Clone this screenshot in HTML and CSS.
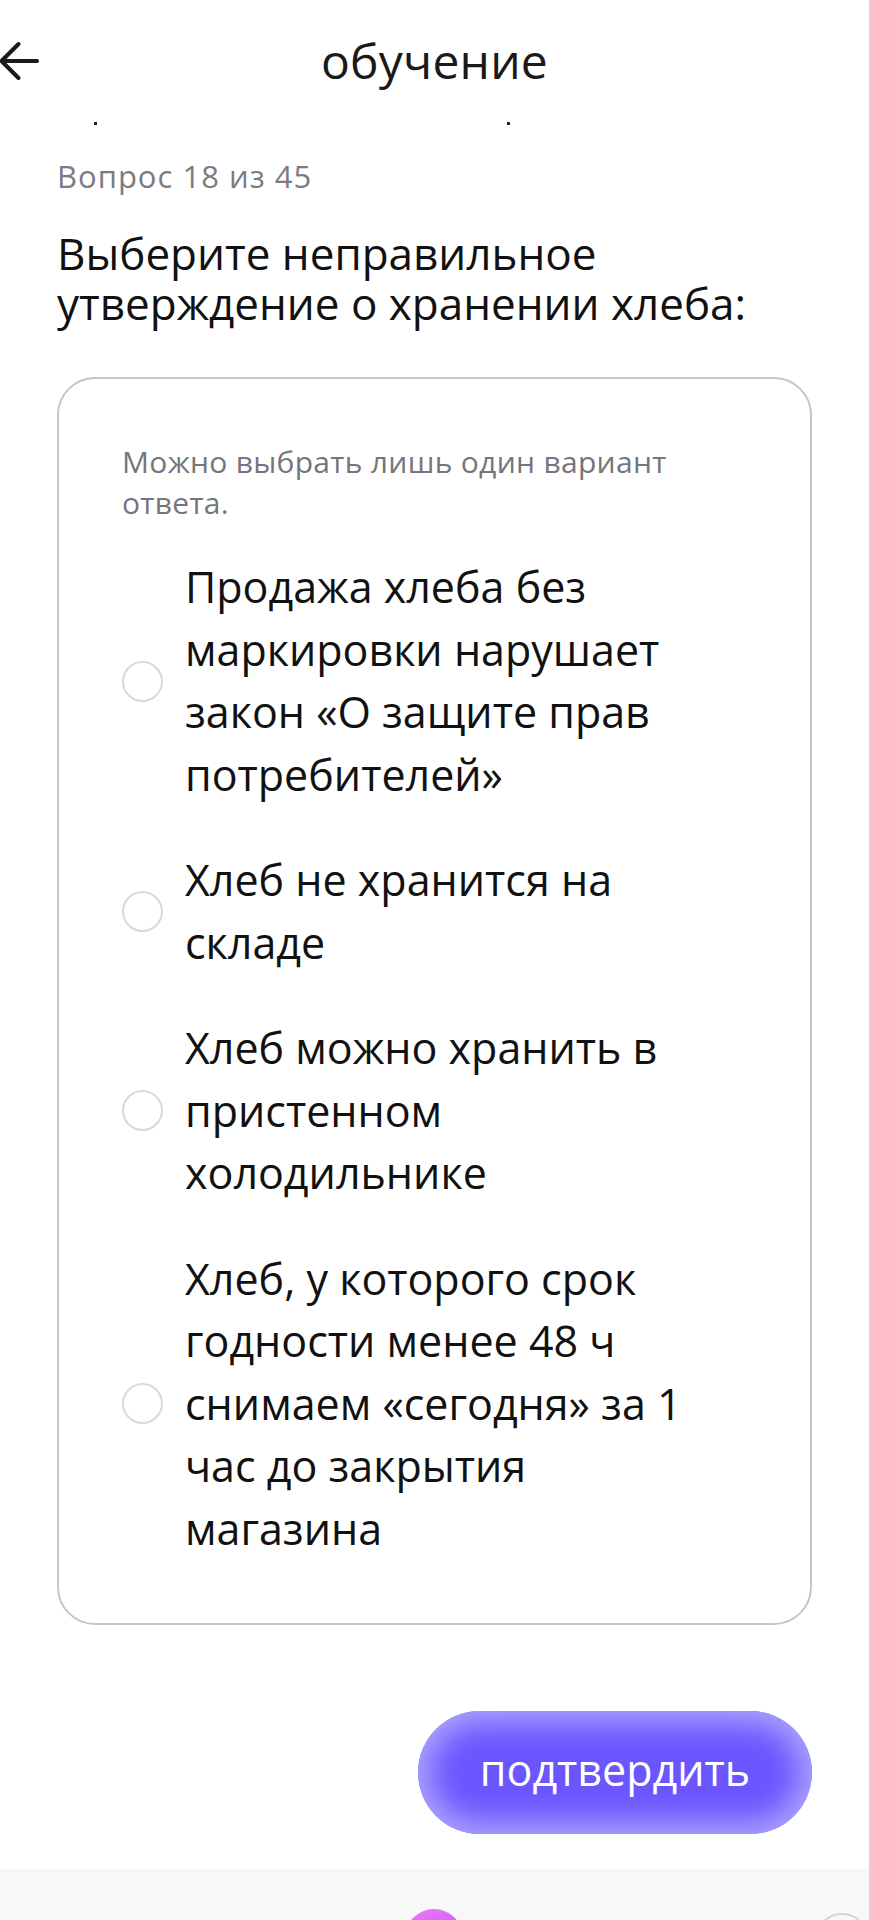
FILE: index.html
```html
<!DOCTYPE html>
<html lang="ru">
<head>
<meta charset="utf-8">
<title>обучение</title>
<link rel="stylesheet" href="styles.css">
</head>
<body>
<div class="screen">
  <header class="topbar">
    <svg class="back" width="42" height="42" viewBox="0 0 42 42" aria-hidden="true">
      <path d="M1.5 21 H37 M1.5 21 L18.5 4 M1.5 21 L18.5 38" fill="none" stroke="#1a1a1a" stroke-width="4" stroke-linecap="round" stroke-linejoin="round"/>
    </svg>
    <h1 class="title">обучение</h1>
  </header>
  <div class="scrolled-remnant"><span class="dot"></span><span class="dot dot-right"></span></div>
  <main class="content">
    <p class="counter">Вопрос 18 из 45</p>
    <h2 class="question">Выберите неправильное утверждение о хранении хлеба:</h2>
    <section class="card">
      <p class="hint">Можно выбрать лишь один вариант ответа.</p>
      <ul class="options">
        <li class="option"><span class="radio"></span><span class="option-text">Продажа хлеба без маркировки нарушает закон «О защите прав потребителей»</span></li>
        <li class="option"><span class="radio"></span><span class="option-text">Хлеб не хранится на складе</span></li>
        <li class="option"><span class="radio"></span><span class="option-text">Хлеб можно хранить в пристенном холодильнике</span></li>
        <li class="option"><span class="radio"></span><span class="option-text">Хлеб, у которого срок годности менее 48&nbsp;ч снимаем «сегодня» за&nbsp;1 час до закрытия магазина</span></li>
      </ul>
    </section>
    <div class="actions">
      <button class="confirm" type="button">подтвердить</button>
    </div>
  </main>
  <nav class="tabbar">
    <span class="tab-orb"></span>
    <span class="tab-ring"></span>
  </nav>
</div>
</body>
</html>
```

FILE: styles.css
```css
* { box-sizing: border-box; }
html, body { margin: 0; padding: 0; background: #ffffff; }
body {
  font-family: "Open Sans", "Noto Sans", "DejaVu Sans", sans-serif;
  color: #111111;
}
.screen {
  width: 869px;
  height: 1920px;
  overflow: hidden;
  display: flex;
  flex-direction: column;
  position: relative;
}
.topbar {
  height: 106px;
  display: flex;
  align-items: center;
  justify-content: center;
  position: relative;
  padding-top: 16px;
}
.back {
  position: absolute;
  left: 0;
  top: 40px;
}
.title {
  margin: 0;
  font-weight: 400;
  font-size: 48px;
  line-height: 60px;
  letter-spacing: 0.2px;
  color: #1a1a1a;
}
.scrolled-remnant {
  height: 20px;
  position: relative;
}
.dot {
  position: absolute;
  left: 94px;
  top: 16px;
  width: 3px;
  height: 3px;
  background: #222;
}
.dot-right { left: 507px; }
.content {
  padding: 0 57px;
  display: flex;
  flex-direction: column;
}
.counter {
  margin: 33px 0 0;
  font-size: 31px;
  line-height: 34px;
  letter-spacing: 1px;
  color: #7b7b82;
}
.question {
  margin: 35px 0 0;
  font-weight: 400;
  font-size: 44px;
  line-height: 50px;
  color: #111;
}
.card {
  margin-top: 49px;
  border: 2px solid #c5c5ca;
  border-radius: 38px;
  padding: 62px 40px 63px 63px;
}
.hint {
  margin: 0;
  font-size: 30px;
  line-height: 41px;
  letter-spacing: 0.3px;
  color: #75757c;
}
.options {
  list-style: none;
  margin: 33px 0 0;
  padding: 0;
  display: flex;
  flex-direction: column;
  gap: 43px;
}
.option {
  display: flex;
  align-items: center;
  gap: 22px;
}
.radio {
  flex: 0 0 41px;
  width: 41px;
  height: 41px;
  border-radius: 50%;
  border: 2.5px solid #d9d9d9;
  background: #fff;
}
.option-text {
  font-size: 43px;
  line-height: 62.5px;
  color: #111;
  max-width: 545px;
}
.actions {
  display: flex;
  justify-content: flex-end;
  margin-top: 86px;
}
.confirm {
  width: 394px;
  height: 123px;
  border: none;
  border-radius: 62px;
  background: #6b55ff;
  box-shadow: inset 0 0 30px 12px #aea4ff;
  color: #ffffff;
  font-family: inherit;
  font-size: 43px;
  padding: 0 0 6px;
}
.tabbar {
  margin-top: auto;
  height: 51px;
  background: #f8f8f8;
  position: relative;
}
.tab-orb {
  position: absolute;
  left: 405px;
  top: 40px;
  width: 58px;
  height: 58px;
  border-radius: 50%;
  background: linear-gradient(160deg, #f07cf6 0%, #c35cf2 60%, #a650ee 100%);
}
.tab-ring {
  position: absolute;
  left: 815px;
  top: 44px;
  width: 54px;
  height: 54px;
  border-radius: 50%;
  border: 2px solid #d4d4d7;
}
```
